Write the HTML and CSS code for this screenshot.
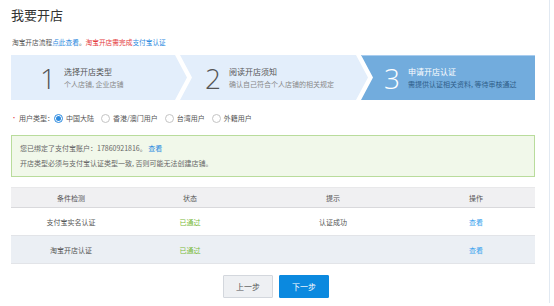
FILE: index.html
```html
<!DOCTYPE html>
<html lang="zh-CN">
<head>
<meta charset="utf-8">
<title>我要开店</title>
<link rel="stylesheet" href="styles.css">
</head>
<body>
<div class="page">
  <h1 class="title">我要开店</h1>
  <p class="info">淘宝开店流程<a class="link">点此查看</a>。<span class="warn">淘宝开店需完成</span><a class="link">支付宝认证</a></p>

  <div class="steps">
    <div class="step step1">
      <span class="num">1</span>
      <div class="stext"><div class="stitle">选择开店类型</div><div class="ssub">个人店铺, 企业店铺</div></div>
    </div>
    <div class="step step2">
      <span class="num">2</span>
      <div class="stext"><div class="stitle">阅读开店须知</div><div class="ssub">确认自己符合个人店铺的相关规定</div></div>
    </div>
    <div class="step step3">
      <span class="num">3</span>
      <div class="stext"><div class="stitle">申请开店认证</div><div class="ssub">需提供认证相关资料, 等待审核通过</div></div>
    </div>
  </div>

  <div class="usertype">
    <span class="req">•</span><span class="label">用户类型：</span>
    <span class="radio on"></span><span class="opt">中国大陆</span>
    <span class="radio"></span><span class="opt">香港/澳门用户</span>
    <span class="radio"></span><span class="opt">台湾用户</span>
    <span class="radio"></span><span class="opt">外籍用户</span>
  </div>

  <div class="notice">
    <div>您已绑定了支付宝账户：17860921816。 <a class="link">查看</a></div>
    <div>开店类型必须与支付宝认证类型一致, 否则可能无法创建店铺。</div>
  </div>

  <table class="checks">
    <thead>
      <tr><th class="c1">条件检测</th><th class="c2">状态</th><th class="c3">提示</th><th class="c4">操作</th></tr>
    </thead>
    <tbody>
      <tr><td>支付宝实名认证</td><td class="ok">已通过</td><td>认证成功</td><td><a class="view">查看</a></td></tr>
      <tr class="alt"><td>淘宝开店认证</td><td class="ok">已通过</td><td></td><td><a class="view">查看</a></td></tr>
    </tbody>
  </table>

  <div class="actions">
    <button class="btn prev">上一步</button>
    <button class="btn next">下一步</button>
  </div>
</div>
</body>
</html>
```

FILE: styles.css
```css
* { box-sizing: border-box; }
html, body { margin: 0; padding: 0; background: #fff; }
body {
  font-family: "Noto Sans CJK SC", "Liberation Sans", sans-serif;
  color: #555;
  font-size: 7px;
}
.page {
  width: 550px;
  height: 303px;
  padding: 8px 14px 0 11px;
  border-right: 1px solid #e1e9f2;
}
.title {
  margin: 0;
  font-size: 13px;
  line-height: 14px;
  font-weight: normal;
  color: #333;
}
.info {
  margin: 15px 0 0 1px;
  font-size: 6.7px;
  line-height: 10px;
  color: #555;
  white-space: nowrap;
}
.link { color: #2d8be0; }
.warn { color: #e4393c; }

.steps {
  display: flex;
  height: 45px;
  margin-top: 8px;
}
.step {
  display: flex;
  align-items: center;
  height: 45px;
  background: #e3eefb;
}
.step1 {
  width: 176px;
  padding-left: 29px;
  clip-path: polygon(0 0, calc(100% - 12px) 0, 100% 50%, calc(100% - 12px) 100%, 0 100%);
}
.step2 {
  width: 188px;
  margin-left: -7px;
  padding-left: 25px;
  clip-path: polygon(0 0, calc(100% - 12px) 0, 100% 50%, calc(100% - 12px) 100%, 0 100%, 12px 50%);
}
.step3 {
  width: 174px;
  margin-left: -7px;
  padding-left: 23px;
  background: #72acdd;
  border-top: 1px solid #a9cdef;
  clip-path: polygon(0 0, 100% 0, 100% 100%, 0 100%, 12px 50%);
}
.num {
  font-family: "Open Sans", "Liberation Sans", sans-serif;
  font-weight: 300;
  font-size: 28px;
  line-height: 28px;
  color: #555;
  width: 13px;
  margin-right: 11px;
}
.stext { display: flex; flex-direction: column; white-space: nowrap; }
.stitle { font-size: 8px; line-height: 12px; color: #555; }
.ssub { font-size: 7px; line-height: 12px; color: #888; }
.step3 .num { color: #fff; }
.step3 .stitle { color: #fff; }
.step3 .ssub { color: #2f5e8a; }

.usertype {
  display: flex;
  align-items: center;
  height: 12px;
  margin-top: 12px;
  line-height: 12px;
  font-size: 7px;
  color: #555;
  white-space: nowrap;
}
.req { color: #e4393c; font-size: 6px; margin-right: 2px; flex-shrink: 0; }
.label { flex-shrink: 0; }
.radio {
  flex-shrink: 0;
  width: 9px;
  height: 9px;
  border: 1px solid #c4c4c4;
  border-radius: 50%;
  margin-right: 3px;
  display: inline-flex;
  align-items: center;
  justify-content: center;
  background: #fff;
}
.radio.on { border-color: #2d8be0; }
.radio.on::after {
  content: "";
  width: 5px;
  height: 5px;
  border-radius: 50%;
  background: #2d8be0;
}
.opt { margin-right: 7px; flex-shrink: 0; }

.notice {
  margin-top: 11px;
  border: 1px solid #b9dc9c;
  background: #f1f8ea;
  padding: 5px 8px 5px;
  line-height: 15px;
  font-size: 7px;
  color: #666;
}

.checks {
  margin-top: 10px;
  width: 524px;
  border-collapse: collapse;
  table-layout: fixed;
  font-size: 7px;
  color: #555;
}
.checks th {
  font-weight: normal;
  height: 20px;
  background: #f0f0f2;
  border-top: 1px solid #e8e8ea;
  border-bottom: 1px solid #d9d9dc;
  text-align: center;
  padding: 0;
}
.c1 { width: 120px; }
.c2 { width: 118px; }
.c3 { width: 168px; }
.c4 { width: 118px; }
.checks td {
  height: 28px;
  text-align: center;
  padding: 0;
  border-bottom: 1px solid #e2e4e8;
}
.checks tr.alt td { background: #ebeff4; }
.ok { color: #7cbb3c; }
.view { color: #3ba4ee; }

.actions {
  display: flex;
  justify-content: center;
  gap: 6px;
  margin-top: 11px;
  padding-left: 6px;
}
.btn {
  width: 50px;
  height: 23px;
  font-family: "Noto Sans CJK SC", sans-serif;
  font-size: 8px;
  border-radius: 1px;
  padding: 0;
  cursor: pointer;
}
.prev {
  background: #eef0f3;
  border: 1px solid #d3d7dd;
  color: #555;
}
.next {
  background: #0b89df;
  border: 1px solid #0b89df;
  color: #fff;
}
```
